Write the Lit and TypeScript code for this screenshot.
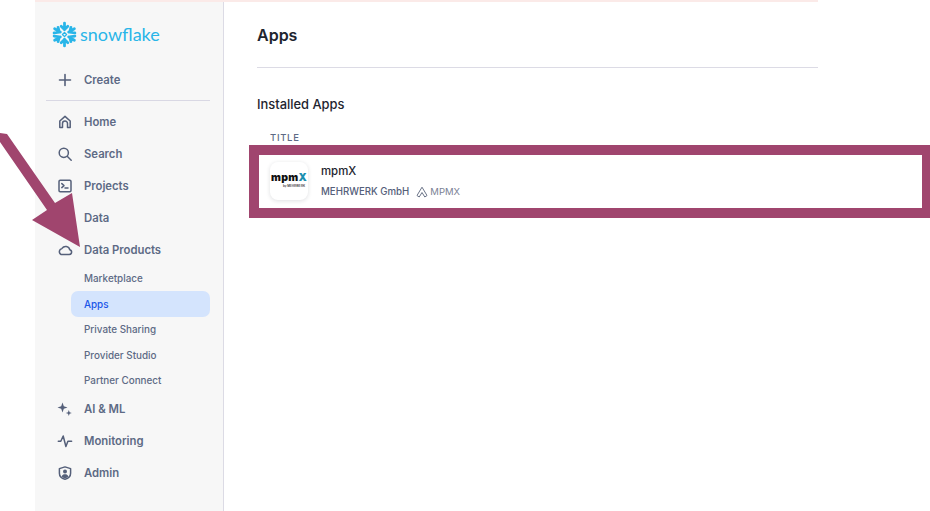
import { LitElement, html, css, svg } from "lit";
import { customElement } from "lit/decorators.js";

const icons: Record<string, unknown> = {
  create: svg`<path d="M8 2.500v11M2.500 8h11" stroke-width="1.600"/>`,
  home: svg`<path d="M2.800 13.600V7L8 2.400 13.200 7v6.600h-2.700V9.600a2.500 2.500 0 0 0-5 0v4z"/>`,
  search: svg`<circle cx="6.800" cy="6.800" r="4.600"/><path d="M10.200 10.200l4 4"/>`,
  projects: svg`<rect x="2" y="2.200" width="12" height="11.600" rx="1.200"/><path d="M4.800 5.600L7 7.600 4.800 9.600M8 10h3"/>`,
  cloud: svg`<path d="M4.200 12.600h8a2.500 2.500 0 0 0 .6-4.900A4.300 4.300 0 0 0 5 6.400a3.300 3.300 0 0 0-.8 6.200z"/>`,
  ai: svg`<path class="fill" d="M5.500 1.500l1.300 3.700 3.700 1.300-3.700 1.300-1.300 3.700-1.300-3.700L.5 6.500l3.700-1.300zM11.800 9l.8 2.200 2.200.8-2.200.8-.8 2.200-.8-2.200-2.200-.8 2.200-.8z"/>`,
  monitor: svg`<path d="M1.300 8.300h2.500L6.200 3l2.700 10.500 2-5.200h3.700"/>`,
  admin: svg`<path d="M8 1.900l5.600 1.700v4.600c0 3-2.300 5.200-5.600 6.100-3.300-.9-5.600-3.100-5.600-6.100V3.600z"/><circle class="fill" cx="8" cy="6.600" r="2"/><path class="fill" d="M4.600 11.400c.6-1.500 1.900-2.100 3.400-2.100s2.800.6 3.400 2.100c-1 1-2.100 1.500-3.400 1.900-1.300-.4-2.400-.9-3.400-1.900z"/>`,
};

const icon = (name: string) =>
  html`<svg class="ico" viewBox="0 0 16 16" aria-hidden="true">${icons[name]}</svg>`;

@customElement("nav-list")
class NavList extends LitElement {
  static styles = css`
    :host { display: block; font-family: Inter, "Liberation Sans", sans-serif; }
    .item { display: flex; align-items: center; height: 32px; gap: 11px; padding-left: 11px; color: #5d6a85; font-size: 11.300px; font-weight: 600; }
    .ico { width: 16px; height: 16px; flex: none; fill: none; stroke: #55607a; stroke-width: 1.500; stroke-linecap: round; stroke-linejoin: round; }
    .ico .fill { fill: #55607a; stroke: none; }
    .blank { width: 16px; flex: none; }
    .rule { height: 1px; background: #d9d8e4; margin: 4px 0 5px; }
    .subs { display: flex; flex-direction: column; margin-left: 25px; }
    .sub { height: 25.500px; display: flex; align-items: center; padding-left: 13px; border-radius: 7px; color: #5d6a85; font-size: 9.900px; font-weight: 500; }
    .sub.active { background: #d4e4fd; color: #1a56e8; }
  `;
  render() {
    const row = (name: string | null, label: string) =>
      html`<div class="item">${name ? icon(name) : html`<span class="blank"></span>`}<span>${label}</span></div>`;
    return html`
      ${row("create", "Create")}
      <div class="rule"></div>
      ${row("home", "Home")}
      ${row("search", "Search")}
      ${row("projects", "Projects")}
      ${row(null, "Data")}
      ${row("cloud", "Data Products")}
      <div class="subs">
        <div class="sub">Marketplace</div>
        <div class="sub active">Apps</div>
        <div class="sub">Private Sharing</div>
        <div class="sub">Provider Studio</div>
        <div class="sub">Partner Connect</div>
      </div>
      ${row("ai", "AI & ML")}
      ${row("monitor", "Monitoring")}
      ${row("admin", "Admin")}
    `;
  }
}

@customElement("app-root")
class AppRoot extends LitElement {
  static styles = css`
    :host { display: block; position: relative; width: 930px; height: 511px; overflow: hidden; background: #fff; font-family: Inter, "Liberation Sans", sans-serif; }
    .frame { display: flex; flex-direction: column; width: 783px; height: 511px; margin-left: 35px; border-top: 2px solid #fbeae8; box-sizing: border-box; }
    .cols { flex: 1; display: flex; min-height: 0; }
    .side { width: 189px; box-sizing: border-box; background: #f7f7f7; border-right: 1px solid #dcdbe5; padding: 0 13px 0 11px; flex: none; }
    .logo { display: flex; align-items: center; height: 32px; margin: 16px 0 13.500px 5px; gap: 2px; color: #29b5e8; font-family: Lato, sans-serif; font-size: 18px; font-weight: 400; }
    .logo svg { width: 27px; height: 27px; flex: none; stroke: #29b5e8; fill: none; stroke-width: 2.700; stroke-linecap: round; stroke-linejoin: round; }
    .main { flex: 1; padding: 0 0 0 33px; min-width: 0; }
    h1 { margin: 0; height: 66px; box-sizing: border-box; padding-top: 23px; border-bottom: 1px solid #dcdbe5; font-size: 16px; line-height: 20px; font-weight: 600; color: #1e252f; }
    h2 { margin: 29px 0 0; font-size: 12.900px; line-height: 16px; font-weight: 500; color: #1e252f; }
    .th { margin: 19px 0 0 13px; font-size: 9.500px; line-height: 12px; font-weight: 500; letter-spacing: 0.700px; color: #5d6a85; }
    .row { display: flex; align-items: center; gap: 13px; margin: 18px 0 0 13px; }
    .tile { width: 38px; height: 38px; flex: none; border-radius: 8px; background: #fff; box-shadow: 0 1px 4px rgba(30, 37, 47, .14); display: flex; flex-direction: column; align-items: center; justify-content: center; gap: 3px; }
    .mp { font-size: 10.500px; font-weight: 900; line-height: 8px; color: #111; letter-spacing: 0.300px; }
    .mp b { color: #1b8fb0; font-weight: 900; }
    .by { font-size: 3px; line-height: 3px; font-weight: 600; color: #333; align-self: flex-end; margin-right: 3px; }
    .name { font-size: 11.400px; font-weight: 500; line-height: 14px; color: #1e252f; margin-top: 1px; }
    .meta { display: flex; align-items: center; margin-top: 7px; font-size: 9.700px; line-height: 14px; font-weight: 500; color: #55607a; }
    .meta svg { width: 12px; height: 12px; margin: 0 2px 0 7px; fill: none; stroke: #6b7488; stroke-width: 1; stroke-linejoin: round; }
    .code { font-size: 9.500px; font-weight: 400; color: #7a8194; }
    .mark { position: absolute; left: 249px; top: 145px; width: 681px; height: 73px; box-sizing: border-box; border: 10px solid #a0456e; border-right-width: 8px; pointer-events: none; }
    .arrow { position: absolute; left: 0; top: 130px; width: 84px; height: 120px; fill: #a0456e; pointer-events: none; }
  `;
  render() {
    return html`
      <div class="frame">
        <div class="cols">
          <aside class="side">
            <div class="logo">
              <svg viewBox="0 0 26 26" aria-hidden="true">
                <path d="M13 2v6.500M13 24v-6.500M9.800 5l3.200 3.200L16.200 5M9.800 21l3.200-3.200 3.200 3.200"/>
                <path d="M3.500 7.500l5.500 3.200M22.500 18.500L17 15.300M3 11.500l5-.8-1.200-4.600M23 14.500l-5 .8 1.200 4.600"/>
                <path d="M22.500 7.500L17 10.700M3.500 18.500L9 15.300M23 11.500l-5-.8 1.200-4.600M3 14.500l5 .8-1.200 4.600"/>
                <path d="M13 11l2 2-2 2-2-2z" stroke-width="1.200"/>
              </svg>
              <span>snowflake</span>
            </div>
            <nav-list></nav-list>
          </aside>
          <main class="main">
            <h1>Apps</h1>
            <h2>Installed Apps</h2>
            <div class="th">TITLE</div>
            <div class="row">
              <div class="tile">
                <div class="mp">mpm<b>X</b></div>
                <div class="by">by MEHRWERK</div>
              </div>
              <div>
                <div class="name">mpmX</div>
                <div class="meta">
                  <span>MEHRWERK GmbH</span>
                  <svg viewBox="0 0 12 12" aria-hidden="true"><path d="M6 1.200L11 9.500 8.800 11 6 6.500 3.200 11 1 9.500z"/></svg>
                  <span class="code">MPMX</span>
                </div>
              </div>
            </div>
          </main>
        </div>
      </div>
      <div class="mark"></div>
      <svg class="arrow" viewBox="0 130 84 120" aria-hidden="true">
        <polygon points="0,133 7,134 55,203 72,193 80,247 32,220 47,210 0,142"/>
      </svg>
    `;
  }
}
